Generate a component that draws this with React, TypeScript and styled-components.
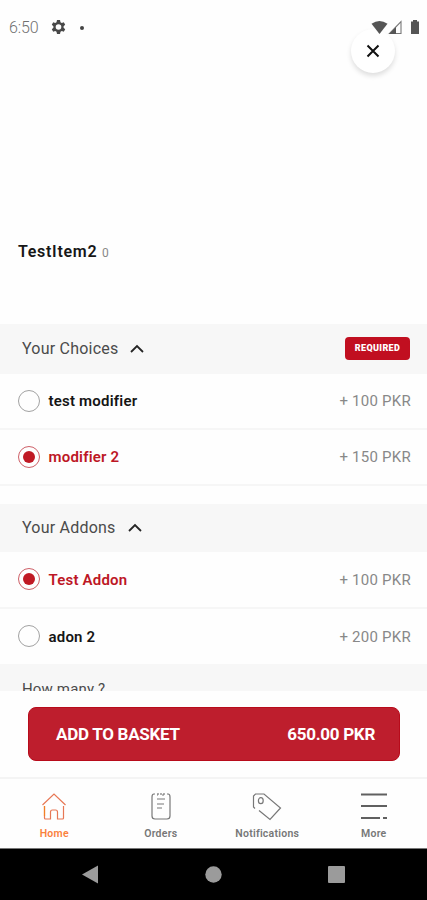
import React from "react";
import styled, { createGlobalStyle } from "styled-components";

const GlobalStyle = createGlobalStyle`
  * { box-sizing: border-box; }
  body { margin: 0; background: #fefefe; font-family: Roboto, sans-serif; }
  button { font-family: inherit; border: 0; padding: 0; background: none; }
`;

const Screen = styled.div`
  width: 427px;
  height: 900px;
  display: flex;
  flex-direction: column;
  overflow: hidden;
  background: #fefefe;
`;

const StatusBar = styled.header`
  height: 54px;
  flex: none;
  display: flex;
  justify-content: space-between;
  padding: 19px 6px 0 9px;
`;

const StatusGroup = styled.div`
  display: flex;
  align-items: center;
  height: 17px;
  position: relative;
  z-index: 2;
`;

const Clock = styled.span`
  width: 42px;
  font-size: 16px;
  font-weight: 300;
  letter-spacing: -0.1px;
  color: #707070;
`;

const Dot = styled.i`
  width: 4px;
  height: 4px;
  margin-left: 14px;
  border-radius: 50%;
  background: #444;
`;

const Hero = styled.section`
  height: 270px;
  flex: none;
  position: relative;
  padding: 188px 18px 0;
`;

const CloseButton = styled.button`
  position: absolute;
  top: -25px;
  right: 32px;
  width: 44px;
  height: 44px;
  display: grid;
  place-items: center;
  border-radius: 50%;
  background: #fff;
  box-shadow: 0 3px 5px rgba(0, 0, 0, 0.13);
`;

const ItemTitle = styled.h1`
  margin: 0;
  font-size: 16px;
  line-height: 20px;
  font-weight: 600;
  letter-spacing: 0.7px;
  color: #171717;
`;

const ItemCount = styled.small`
  font-size: 12px;
  font-weight: 400;
  color: #888;
`;

const Content = styled.main`
  height: 367px;
  flex: none;
  overflow: hidden;
`;

const Section = styled.section<{ $gap?: number }>`
  margin-bottom: ${(p) => p.$gap ?? 0}px;
`;

const SectionHeader = styled.div<{ $height: number }>`
  height: ${(p) => p.$height}px;
  display: flex;
  align-items: center;
  gap: 12px;
  padding: 0 17px 0 22px;
  background: #f7f7f7;
`;

const SectionTitle = styled.h2<{ $compact?: boolean }>`
  margin: 0;
  font-size: ${(p) => (p.$compact ? 15 : 16)}px;
  line-height: 20px;
  font-weight: 400;
  letter-spacing: ${(p) => (p.$compact ? 0.15 : 0.22)}px;
  color: #4b4b4b;
`;

const Badge = styled.span`
  margin-left: auto;
  width: 65px;
  height: 23px;
  margin-bottom: 1px;
  border-radius: 4px;
  background: #c10f20;
  color: #fff;
  font-size: 9px;
  line-height: 23px;
  font-weight: 900;
  text-align: center;
  letter-spacing: 0.35px;
`;

const Option = styled.label<{ $height: number; $line?: boolean }>`
  height: ${(p) => p.$height}px;
  display: flex;
  align-items: center;
  padding: 0 16px 0 18px;
  border-bottom: ${(p) => (p.$line ? "2px solid #f6f6f6" : "0")};
`;

const Radio = styled.span<{ $selected?: boolean }>`
  width: 22px;
  height: 22px;
  margin-bottom: 1px;
  display: grid;
  place-items: center;
  border: 1px solid ${(p) => (p.$selected ? "#ce6068" : "#a2a2a2")};
  border-radius: 50%;
  &::after {
    content: "";
    width: 12px;
    height: 12px;
    border-radius: 50%;
    background: ${(p) => (p.$selected ? "#c01924" : "transparent")};
  }
`;

const OptionName = styled.span<{ $selected?: boolean }>`
  margin-left: 8.5px;
  flex: 1;
  font-size: 15px;
  font-weight: 600;
  letter-spacing: 0.2px;
  color: ${(p) => (p.$selected ? "#bd1725" : "#151515")};
`;

const Price = styled.span`
  font-size: 15px;
  letter-spacing: 0.25px;
  color: #888;
`;

const Footer = styled.div`
  height: 88px;
  flex: none;
  padding: 16px 27px 0 28px;
  border-bottom: 2px solid #f4f4f4;
`;

const BasketButton = styled.button`
  width: 100%;
  height: 54px;
  display: flex;
  align-items: center;
  justify-content: space-between;
  padding: 0 24px 0 27px;
  border: 1px solid #b80b1b;
  border-radius: 8px;
  background: #be1e2d;
  color: #fff;
  font-size: 17px;
  font-weight: 700;
  letter-spacing: -0.28px;
`;

const TabBar = styled.nav`
  height: 70px;
  flex: none;
  display: grid;
  grid-template-columns: repeat(4, 1fr);
  padding-left: 1px;
  border-bottom: 1px solid #777;
`;

const Tab = styled.button<{ $active?: boolean }>`
  display: flex;
  flex-direction: column;
  align-items: center;
  padding-top: 13px;
  gap: 5px;
  font-size: 10.5px;
  line-height: 14px;
  font-weight: 600;
  letter-spacing: 0.25px;
  color: ${(p) => (p.$active ? "#fa813d" : "#777")};
`;

const SystemBar = styled.footer`
  flex: 1;
  display: flex;
  align-items: center;
  gap: 106px;
  padding-left: 82px;
  background: #000;
`;

const Chevron = () => (
  <svg width="14" height="10" viewBox="0 0 14 10" fill="none" stroke="#252525" strokeWidth="1.8">
    <path d="m1 8 6-6 6 6" />
  </svg>
);

const Gear = () => (
  <svg width="15" height="16" viewBox="0 0 15 16">
    <path d="M6 1h3l.5 2.2 1.3.7 2-.7 1.4 2.5-1.6 1.5v1.6l1.6 1.5-1.4 2.5-2-.7-1.3.7L9 15H6l-.5-2.2-1.3-.7-2 .7L.8 10.3l1.6-1.5V7.2L.8 5.7l1.4-2.5 2 .7 1.3-.7Z" fill="#484848" transform="translate(0 -1)" />
    <circle cx="7.5" cy="7" r="2.8" fill="#fefefe" />
  </svg>
);

const StatusIcons = () => (
  <svg width="50" height="17" viewBox="0 0 50 17">
    <path d="M.5 4.8Q8.5-1 16.5 4.8L8.5 15Z" fill="#555" />
    <path d="M30 2.5V14.5H18.5Z" fill="none" stroke="#777" strokeWidth="1.1" />
    <path d="M18 15 25 8v7Z" fill="#555" />
    <path d="M42 1h4v1.5h2V15h-8V2.5h2Z" fill="#555" />
  </svg>
);

const CloseIcon = () => (
  <svg width="14" height="14" viewBox="0 0 14 14" stroke="#111" strokeWidth="2">
    <path d="m1.5 1.5 11 11m0-11-11 11" />
  </svg>
);

const HomeIcon = () => (
  <svg width="28" height="30" viewBox="0 0 28 30" fill="none" stroke="#e77755" strokeWidth="1.2">
    <path d="M2.5 13 14 2l11.5 11" />
    <path d="M4.5 14v12q0 1 1 1h5v-7q0-2 2-2h3q2 0 2 2v7h5q1 0 1-1V14" />
    <path d="M4.5 14v10" stroke="#f28024" />
  </svg>
);

const OrdersIcon = () => (
  <svg width="22" height="30" viewBox="0 0 22 30" fill="none" stroke="#777" strokeWidth="1.2">
    <path d="M5 2H4Q2 2 2 5v19q0 3 3 3h12q3 0 3-3V5q0-3-2-3h-1M8 3V1m3 2V1m3 2V1M7 3h1m4 0h2" />
    <path d="M7 7h8M7 12h7M7 16h5" />
  </svg>
);

const TagIcon = () => (
  <svg width="32" height="30" viewBox="0 0 32 30" fill="none" stroke="#777" strokeWidth="1.2">
    <path d="M4 16.5 2.5 15V4l2-2H13L29.5 16 19 27.5 8 18.5" />
    <ellipse cx="9.8" cy="8.7" rx="2.4" ry="3" />
  </svg>
);

const MoreIcon = () => (
  <svg width="28" height="30" viewBox="0 0 28 30" stroke="#606060" strokeWidth="1.8">
    <path d="M1 2.5h26M1 14h26M1 26h19" />
    <path d="M23 26h4" strokeWidth="2" />
  </svg>
);

export default function App() {
  return (
    <>
      <GlobalStyle />
      <Screen>
        <StatusBar>
          <StatusGroup><Clock>6:50</Clock><Gear /><Dot /></StatusGroup>
          <StatusGroup><StatusIcons /></StatusGroup>
        </StatusBar>
        <Hero>
          <CloseButton aria-label="Close"><CloseIcon /></CloseButton>
          <ItemTitle>TestItem2 <ItemCount>0</ItemCount></ItemTitle>
        </Hero>
        <Content>
          <Section $gap={18}>
            <SectionHeader $height={50}>
              <SectionTitle>Your Choices</SectionTitle><Chevron /><Badge>REQUIRED</Badge>
            </SectionHeader>
            <Option $height={56} $line><Radio /><OptionName>test modifier</OptionName><Price>+ 100 PKR</Price></Option>
            <Option $height={56} $line><Radio $selected /><OptionName $selected>modifier 2</OptionName><Price>+ 150 PKR</Price></Option>
          </Section>
          <Section>
            <SectionHeader $height={48}><SectionTitle>Your Addons</SectionTitle><Chevron /></SectionHeader>
            <Option $height={57} $line><Radio $selected /><OptionName $selected>Test Addon</OptionName><Price>+ 100 PKR</Price></Option>
            <Option $height={55}><Radio /><OptionName>adon 2</OptionName><Price>+ 200 PKR</Price></Option>
          </Section>
          <Section>
            <SectionHeader $height={50}><SectionTitle $compact>How many ?</SectionTitle></SectionHeader>
          </Section>
        </Content>
        <Footer>
          <BasketButton><span>ADD TO BASKET</span><span>650.00 PKR</span></BasketButton>
        </Footer>
        <TabBar>
          <Tab $active><HomeIcon />Home</Tab>
          <Tab><OrdersIcon />Orders</Tab>
          <Tab><TagIcon />Notifications</Tab>
          <Tab><MoreIcon />More</Tab>
        </TabBar>
        <SystemBar>
          <svg width="17" height="20" viewBox="0 0 17 20" fill="#9b9b9b"><path d="M0 9.5 16 .5v18Z" /></svg>
          <svg width="17" height="18" viewBox="0 0 17 18" fill="#9b9b9b"><circle cx="8.5" cy="8.5" r="8.2" /></svg>
          <svg width="17" height="18" viewBox="0 0 17 18" fill="#9b9b9b"><rect width="17" height="17" rx="1" /></svg>
        </SystemBar>
      </Screen>
    </>
  );
}
